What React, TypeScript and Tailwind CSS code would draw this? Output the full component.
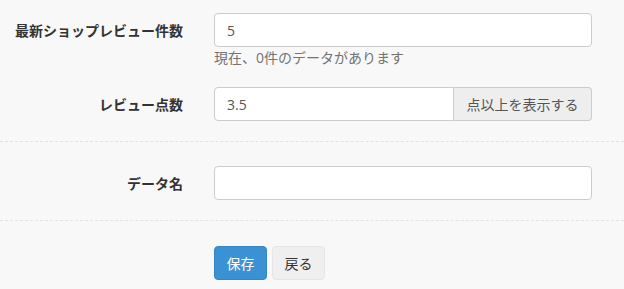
import React from "react";

const font = { fontFamily: '"Open Sans", "Noto Sans CJK JP", sans-serif' };

function Row({ label, children }: { label: string; children: React.ReactNode }) {
  return (
    <div className="flex">
      <div className="w-[199px] shrink-0 pr-4 h-[34px] flex items-center justify-end text-[14px] font-bold text-[#333]">
        {label}
      </div>
      <div className="ml-[15px] w-[378px]">{children}</div>
    </div>
  );
}

export default function App() {
  return (
    <div className="w-[624px] h-[289px] bg-[#f8f8f8] overflow-hidden" style={font}>
      <div className="pt-[13px] pb-5">
        <Row label="最新ショップレビュー件数">
          <input
            defaultValue="5"
            className="w-full h-[34px] px-3 bg-white border border-[#ccc] rounded text-[14px] text-[#555] outline-none"
          />
          <p className="mt-[1px] leading-5 text-[14px] text-[#737373]">
            現在、0件のデータがあります
          </p>
        </Row>
        <div className="mt-[19px]">
          <Row label="レビュー点数">
            <div className="flex h-[34px]">
              <input
                defaultValue="3.5"
                className="w-[240px] h-full px-3 bg-white border border-[#ccc] rounded-l text-[14px] text-[#555] outline-none"
              />
              <span className="flex-1 flex items-center justify-center bg-[#eee] border border-l-0 border-[#ccc] rounded-r text-[14px] text-[#555]">
                点以上を表示する
              </span>
            </div>
          </Row>
        </div>
      </div>
      <div className="border-t border-dashed border-[#e2e2e2] pt-6 pb-5">
        <Row label="データ名">
          <input className="w-full h-[34px] px-3 bg-white border border-[#ccc] rounded text-[14px] outline-none" />
        </Row>
      </div>
      <div className="border-t border-dashed border-[#e2e2e2] pt-[25px]">
        <div className="ml-[214px] flex gap-[5px]">
          <button className="w-[53px] h-[34px] rounded bg-[#3a92d4] border border-[#3585c2] text-white text-[14px]">
            保存
          </button>
          <button className="w-[53px] h-[34px] rounded bg-[#efefef] border border-[#e6e6e6] text-[#333] text-[14px]">
            戻る
          </button>
        </div>
      </div>
    </div>
  );
}
